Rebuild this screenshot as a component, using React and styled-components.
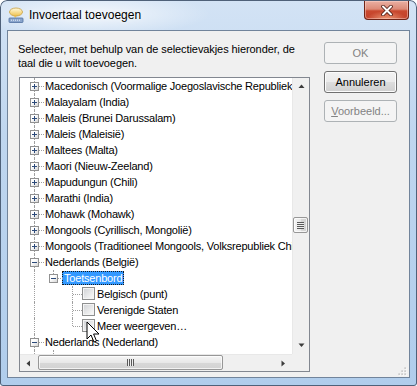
import React from 'react';
import styled, { createGlobalStyle } from 'styled-components';

const GlobalStyle = createGlobalStyle`
  html, body { margin: 0; padding: 0; background: #fff; }
  body {
    font-family: "Liberation Sans", Arial, sans-serif;
    font-size: 11px;
    color: #000;
  }
  * { box-sizing: border-box; }
`;

const Window = styled.div`
  position: relative;
  width: 417px;
  height: 386px;
  display: flex;
  flex-direction: column;
  border-radius: 7px 7px 3px 3px;
  overflow: hidden;
  background:
    radial-gradient(ellipse 120px 22px at 90px 14px, rgba(255, 255, 255, 0.75), rgba(255, 255, 255, 0) 100%),
    linear-gradient(180deg, #d3e3f5 0%, #bfd6ef 35%, #b0cdec 100%);
  box-shadow: inset 0 0 0 1px #4f6179;
`;

const TitleBar = styled.div`
  height: 30px;
  flex: none;
  display: flex;
  align-items: center;
  padding-left: 8px;
`;

const TitleIcon = styled.svg`
  width: 16px;
  height: 16px;
  flex: none;
`;

const TitleText = styled.span`
  margin-left: 5px;
  font-size: 12px;
  color: #000;
  text-shadow: 0 0 6px rgba(255, 255, 255, 0.9);
`;

const CloseButton = styled.div`
  align-self: flex-start;
  margin: 1px 8px 0 auto;
  width: 45px;
  height: 19px;
  display: flex;
  align-items: center;
  justify-content: center;
  border: 1px solid #6e2417;
  border-top: none;
  border-radius: 0 0 4px 4px;
  background:
    radial-gradient(ellipse 20px 8px at 50% 100%, rgba(255, 190, 150, 0.7), rgba(255, 190, 150, 0) 100%),
    linear-gradient(180deg, #eab0a3 0%, #dc8a77 45%, #c9492f 55%, #c2402a 100%);
  box-shadow: inset 0 0 0 1px rgba(255, 220, 210, 0.45);
`;

const Client = styled.div`
  position: relative;
  flex: 1;
  margin: 0 7px 8px 7px;
  border: 1px solid #71849b;
  background: #f0f0f0;
  display: flex;
  padding: 11px 12px 0 10px;
`;

const LeftColumn = styled.div`
  width: 292px;
  flex: none;
`;

const Prompt = styled.p`
  margin: 0;
  line-height: 14px;
  letter-spacing: -0.08px;
  white-space: nowrap;
`;

const TreeBox = styled.div`
  margin: 7px 0 0 1px;
  width: 291px;
  height: 295px;
  border: 1px solid #828790;
  background: #fff;
  display: grid;
  grid-template-columns: 1fr 17px;
  grid-template-rows: 1fr 17px;
`;

const TreeBody = styled.div`
  overflow: hidden;
`;

const Row = styled.div`
  display: flex;
  height: 16px;
  padding-left: 5px;
  white-space: nowrap;
  letter-spacing: -0.2px;
`;

const Guide = styled.span`
  position: relative;
  flex: none;
  width: 19px;
  height: 16px;
  display: flex;
  justify-content: center;
  padding-top: 4px;

  &::before {
    content: '';
    display: ${(p) => (p.$v ? 'block' : 'none')};
    position: absolute;
    left: 9px;
    top: 0;
    bottom: ${(p) => (p.$v === 'top' ? '8px' : '0')};
    border-left: 1px dotted #a0a0a0;
  }

  &::after {
    content: '';
    display: ${(p) => (p.$h ? 'block' : 'none')};
    position: absolute;
    left: 10px;
    right: 0;
    top: 8px;
    border-top: 1px dotted #a0a0a0;
  }
`;

const Expander = styled.span`
  position: relative;
  z-index: 1;
  width: 9px;
  height: 9px;
  border: 1px solid #919191;
  background: linear-gradient(135deg, #ffffff 35%, #d6d6d6 100%);

  &::before {
    content: '';
    position: absolute;
    left: 1px;
    top: 3px;
    width: 5px;
    height: 1px;
    background: #2c4a7a;
  }

  &::after {
    content: '';
    display: ${(p) => (p.$open ? 'none' : 'block')};
    position: absolute;
    left: 3px;
    top: 1px;
    width: 1px;
    height: 5px;
    background: #2c4a7a;
  }
`;

const Check = styled.span`
  flex: none;
  width: 13px;
  height: 13px;
  margin-top: 1px;
  border: 1px solid #8e8f8f;
  background: linear-gradient(135deg, #cfd1d4 0%, #f6f6f6 85%);
  box-shadow: inset 0 0 0 1px #f4f4f4;
`;

const Label = styled.span`
  height: 14px;
  margin: 1px 0 0 ${(p) => (p.$afterCheck ? '0' : '-1px')};
  padding: 0 2px;
  line-height: 14px;
  color: ${(p) => (p.$selected ? '#fff' : '#000')};
  background: ${(p) => (p.$selected ? '#3399ff' : 'transparent')};
  outline: ${(p) => (p.$selected ? '1px dotted #1a1a1a' : 'none')};
  outline-offset: -1px;
`;

const VScroll = styled.div`
  display: flex;
  flex-direction: column;
  background: #f0f0f0;
  border-left: 1px solid #e8e8e8;
`;

const HScroll = styled.div`
  display: flex;
  background: #f0f0f0;
  border-top: 1px solid #e8e8e8;
`;

const Corner = styled.div`
  background: #f0f0f0;
`;

const ArrowCell = styled.div`
  flex: none;
  width: ${(p) => (p.$horizontal ? '17px' : 'auto')};
  height: ${(p) => (p.$horizontal ? 'auto' : '17px')};
  display: flex;
  align-items: center;
  justify-content: center;
`;

const TrackGap = styled.div`
  flex: ${(p) => (p.$grow ? '1' : 'none')};
`;

const VThumb = styled.div`
  flex: none;
  height: 16px;
  margin: 0 1px 0 0;
  border: 1px solid #979797;
  border-radius: 2px;
  background: linear-gradient(90deg, #f5f5f5 0%, #e8e8e8 50%, #d8d8d8 51%, #d2d2d2 100%);
  box-shadow: inset 0 0 0 1px rgba(255, 255, 255, 0.7);
  display: flex;
  align-items: center;
  justify-content: center;
`;

const HThumb = styled.div`
  flex: none;
  width: 185px;
  margin: 0 0 1px 1px;
  border: 1px solid #979797;
  border-radius: 2px;
  background: linear-gradient(180deg, #f5f5f5 0%, #e8e8e8 50%, #d8d8d8 51%, #d2d2d2 100%);
  box-shadow: inset 0 0 0 1px rgba(255, 255, 255, 0.7);
  display: flex;
  align-items: center;
  justify-content: center;
`;

const Grip = styled.span`
  width: 7px;
  height: 7px;
  background: ${(p) =>
    p.$vertical
      ? 'repeating-linear-gradient(180deg, #595959 0 1px, #eeeeee 1px 2px)'
      : 'repeating-linear-gradient(90deg, #595959 0 1px, #eeeeee 1px 2px)'};
`;

const ButtonColumn = styled.div`
  margin-left: 14px;
  width: 73px;
  flex: none;
  display: flex;
  flex-direction: column;
  gap: 7px;
`;

const Button = styled.div`
  height: 22px;
  border-radius: 3px;
  display: flex;
  align-items: center;
  justify-content: center;
  border: 1px solid ${(p) => (p.$disabled ? '#adb2b5' : '#707070')};
  color: ${(p) => (p.$disabled ? '#838383' : '#000')};
  background: ${(p) =>
    p.$disabled
      ? '#f4f4f4'
      : 'linear-gradient(180deg, #f2f2f2 0%, #ebebeb 48%, #dddddd 52%, #cfcfcf 100%)'};
  box-shadow: ${(p) => (p.$disabled ? 'none' : 'inset 0 0 0 1px #fcfcfc')};
`;

const ResizeGrip = styled.svg`
  position: absolute;
  right: 2px;
  bottom: 1px;
`;

const Cursor = styled.svg`
  position: absolute;
  left: 86px;
  top: 321px;
`;

const tree = [
  { text: 'Macedonisch (Voormalige Joegoslavische Republiek Macedonië)', cols: [{ v: 'full', x: '+' }] },
  { text: 'Malayalam (India)', cols: [{ v: 'full', x: '+' }] },
  { text: 'Maleis (Brunei Darussalam)', cols: [{ v: 'full', x: '+' }] },
  { text: 'Maleis (Maleisië)', cols: [{ v: 'full', x: '+' }] },
  { text: 'Maltees (Malta)', cols: [{ v: 'full', x: '+' }] },
  { text: 'Maori (Nieuw-Zeeland)', cols: [{ v: 'full', x: '+' }] },
  { text: 'Mapudungun (Chili)', cols: [{ v: 'full', x: '+' }] },
  { text: 'Marathi (India)', cols: [{ v: 'full', x: '+' }] },
  { text: 'Mohawk (Mohawk)', cols: [{ v: 'full', x: '+' }] },
  { text: 'Mongools (Cyrillisch, Mongolië)', cols: [{ v: 'full', x: '+' }] },
  { text: 'Mongools (Traditioneel Mongools, Volksrepubliek China)', cols: [{ v: 'full', x: '+' }] },
  { text: 'Nederlands (België)', cols: [{ v: 'full', x: '-' }] },
  { text: 'Toetsenbord', selected: true, cols: [{ v: 'full' }, { v: 'top', x: '-' }] },
  { text: 'Belgisch (punt)', check: true, cols: [{ v: 'full' }, {}, { v: 'full', h: true }] },
  { text: 'Verenigde Staten', check: true, cols: [{ v: 'full' }, {}, { v: 'full', h: true }] },
  { text: 'Meer weergeven…', check: true, cols: [{ v: 'full' }, {}, { v: 'top', h: true }] },
  { text: 'Nederlands (Nederland)', cols: [{ v: 'full', x: '-' }] },
  { text: 'Toetsenbord', cols: [{ v: 'full' }, { v: 'full', x: '-' }] },
];

const ArrowGlyph = ({ dir }) => {
  const pts = {
    up: '0.5,4 3.5,0.5 6.5,4',
    down: '0.5,0.5 3.5,4 6.5,0.5',
    left: '4,0.5 0.5,3.5 4,6.5',
    right: '0.5,0.5 4,3.5 0.5,6.5',
  }[dir];
  const horizontal = dir === 'left' || dir === 'right';
  return (
    <svg width={horizontal ? 5 : 7} height={horizontal ? 7 : 5}>
      <polygon points={pts} fill="#3c3c3c" />
    </svg>
  );
};

const TreeRow = ({ item }) => (
  <Row>
    {item.cols.map((c, i) => (
      <Guide key={i} $v={c.v} $h={c.h || !!c.x}>
        {c.x && <Expander $open={c.x === '-'} />}
      </Guide>
    ))}
    {item.check && <Check />}
    <Label $selected={item.selected} $afterCheck={item.check}>
      {item.text}
    </Label>
  </Row>
);

const App = () => (
  <>
    <GlobalStyle />
    <Window>
      <TitleBar>
        <TitleIcon viewBox="0 0 16 16">
          <defs>
            <linearGradient id="bubble" x1="0" y1="0" x2="0" y2="1">
              <stop offset="0" stopColor="#fffbe0" />
              <stop offset="1" stopColor="#efc24e" />
            </linearGradient>
          </defs>
          <ellipse cx="8" cy="5" rx="6.5" ry="4" fill="url(#bubble)" stroke="#c89d3c" strokeWidth="0.8" />
          <path d="M6 8.5 L7 11 L9 8.5 Z" fill="#efc24e" />
          <rect x="1" y="11" width="14" height="4.5" rx="0.8" fill="#8aa5cc" stroke="#4f6f9e" strokeWidth="0.8" />
          <path d="M3 13.2 H13" stroke="#e8f0fa" strokeWidth="1" strokeDasharray="1 1" />
        </TitleIcon>
        <TitleText>Invoertaal toevoegen</TitleText>
        <CloseButton>
          <svg width="12" height="11" viewBox="0 0 12 11">
            <path d="M2 1.5 L10 9.5 M10 1.5 L2 9.5" stroke="#4a1a12" strokeWidth="3.6" strokeLinecap="round" />
            <path d="M2 1.5 L10 9.5 M10 1.5 L2 9.5" stroke="#ffffff" strokeWidth="2" strokeLinecap="round" />
          </svg>
        </CloseButton>
      </TitleBar>

      <Client>
        <LeftColumn>
          <Prompt>
            Selecteer, met behulp van de selectievakjes hieronder, de
            <br />
            taal die u wilt toevoegen.
          </Prompt>
          <TreeBox>
            <TreeBody>
              {tree.map((item, i) => (
                <TreeRow key={i} item={item} />
              ))}
            </TreeBody>
            <VScroll>
              <ArrowCell>
                <ArrowGlyph dir="up" />
              </ArrowCell>
              <TrackGap style={{ height: 122 }} />
              <VThumb>
                <Grip $vertical />
              </VThumb>
              <TrackGap $grow />
              <ArrowCell>
                <ArrowGlyph dir="down" />
              </ArrowCell>
            </VScroll>
            <HScroll>
              <ArrowCell $horizontal>
                <ArrowGlyph dir="left" />
              </ArrowCell>
              <HThumb>
                <Grip />
              </HThumb>
              <TrackGap $grow />
              <ArrowCell $horizontal>
                <ArrowGlyph dir="right" />
              </ArrowCell>
            </HScroll>
            <Corner />
          </TreeBox>
        </LeftColumn>

        <ButtonColumn>
          <Button $disabled>OK</Button>
          <Button>Annuleren</Button>
          <Button $disabled>
            <span>
              <u>V</u>oorbeeld...
            </span>
          </Button>
        </ButtonColumn>

        <ResizeGrip width="9" height="9" viewBox="0 0 9 9">
          {[
            [7, 1],
            [4, 4],
            [7, 4],
            [1, 7],
            [4, 7],
            [7, 7],
          ].map(([x, y]) => (
            <g key={`${x}-${y}`}>
              <rect x={x + 0.5} y={y + 0.5} width="1.2" height="1.2" fill="#ffffff" />
              <rect x={x - 0.5} y={y - 0.5} width="1.2" height="1.2" fill="#a3a3a3" />
            </g>
          ))}
        </ResizeGrip>
      </Client>

      <Cursor width="14" height="23" viewBox="0 0 14 23">
        <path
          d="M1 1 L1 18 L5 14 L8 21 L10.5 20 L7.6 13 L13 13 Z"
          fill="#ffffff"
          stroke="#000000"
          strokeWidth="1"
          strokeLinejoin="miter"
        />
      </Cursor>
    </Window>
  </>
);

export default App;
